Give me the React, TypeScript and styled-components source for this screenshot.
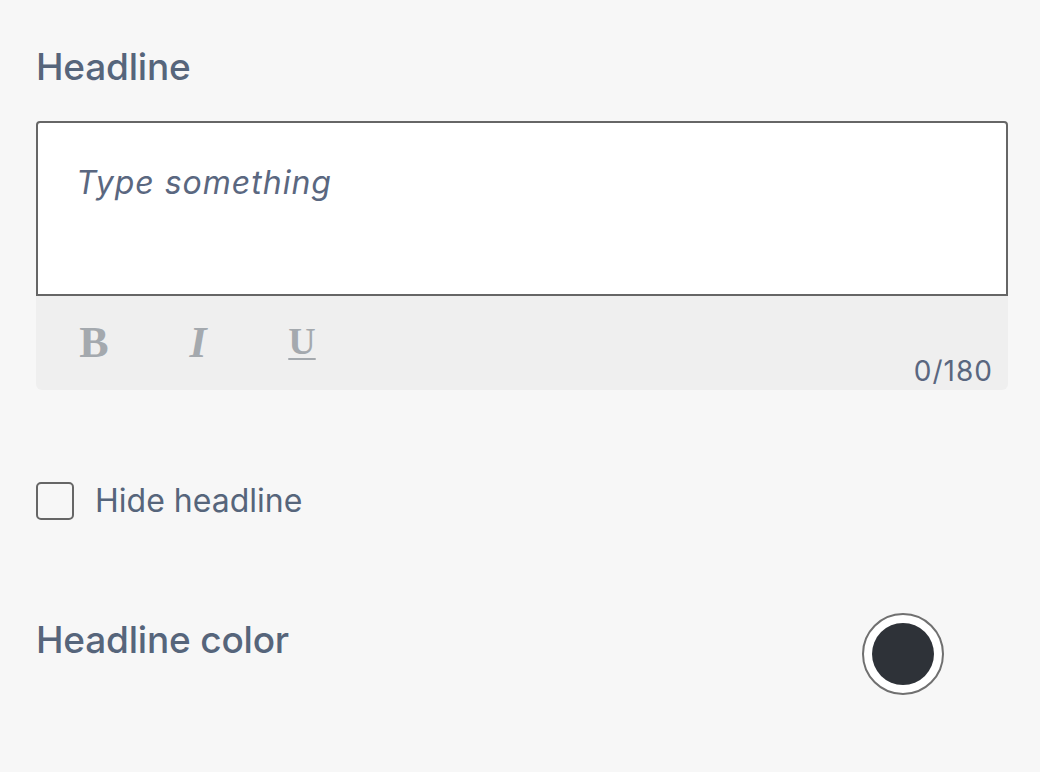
import styled, { createGlobalStyle } from "styled-components";

const GlobalStyle = createGlobalStyle`
  html, body {
    margin: 0;
    padding: 0;
    background: #f7f7f7;
  }
  body {
    font-family: Inter, Lato, Arial, sans-serif;
    color: #56657b;
  }
`;

const tools = [
  { key: "bold", glyph: "B" },
  { key: "italic", glyph: "I" },
  { key: "underline", glyph: "U" },
];

function App() {
  return (
    <>
      <GlobalStyle />
      <Panel>
        <Label>Headline</Label>

        <Editor>
          <TextInput placeholder="Type something" />
          <Toolbar>
            {tools.map((t) => (
              <ToolButton key={t.key} variant={t.key}>
                {t.glyph}
              </ToolButton>
            ))}
            <Counter>0/180</Counter>
          </Toolbar>
        </Editor>

        <CheckRow>
          <Box type="checkbox" />
          <CheckText>Hide headline</CheckText>
        </CheckRow>

        <ColorRow>
          <Label>Headline color</Label>
          <Swatch>
            <SwatchFill color="#2e3238" />
          </Swatch>
        </ColorRow>
      </Panel>
    </>
  );
}

const Panel = styled.div`
  display: flex;
  flex-direction: column;
  padding: 43px 32px 60px 36px;
`;

const Label = styled.div`
  font-size: 37px;
  line-height: 48px;
  font-weight: 500;
  letter-spacing: -0.2px;
  color: #56657b;
`;

const Editor = styled.div`
  display: flex;
  flex-direction: column;
  margin-top: 30px;
`;

const TextInput = styled.textarea`
  box-sizing: border-box;
  height: 175px;
  margin: 0;
  padding: 40px 38px 0 38px;
  border: 2px solid #666;
  border-radius: 4px 4px 0 0;
  background: #fff;
  resize: none;
  outline: none;
  font-family: Inter, Lato, Arial, sans-serif;
  font-size: 32px;
  line-height: 40px;
  letter-spacing: 1px;
  color: #56657b;

  &::placeholder {
    font-style: italic;
    color: #5a6780;
    opacity: 1;
  }
`;

const Toolbar = styled.div`
  display: flex;
  align-items: flex-start;
  height: 94px;
  box-sizing: border-box;
  padding: 25px 15px 5px 28px;
  background: #efefef;
  border-radius: 0 0 6px 6px;
`;

const ToolButton = styled.button<{ variant: string }>`
  width: 60px;
  height: 44px;
  margin-right: 44px;
  margin-top: ${(p) => (p.variant === "underline" ? "-2px" : "0")};
  padding: 0;
  border: none;
  background: none;
  font-family: "Liberation Serif", "Times New Roman", serif;
  font-size: ${(p) => (p.variant === "underline" ? "38px" : "44px")};
  line-height: 44px;
  font-weight: 700;
  font-style: ${(p) => (p.variant === "italic" ? "italic" : "normal")};
  text-decoration: ${(p) => (p.variant === "underline" ? "underline" : "none")};
  text-decoration-thickness: 2px;
  text-underline-offset: 4px;
  color: #a4a9ae;
  cursor: pointer;
`;

const Counter = styled.span`
  margin-left: auto;
  align-self: flex-end;
  font-size: 28px;
  line-height: 28px;
  letter-spacing: 1px;
  color: #5a6780;
`;

const CheckRow = styled.label`
  display: flex;
  align-items: center;
  gap: 21px;
  margin-top: 92px;
`;

const Box = styled.input`
  appearance: none;
  box-sizing: border-box;
  width: 38px;
  height: 38px;
  margin: 0;
  border: 2px solid #666;
  border-radius: 5px;
  background: transparent;
`;

const CheckText = styled.span`
  font-size: 32px;
  line-height: 38px;
  color: #56657b;
`;

const ColorRow = styled.div`
  display: flex;
  align-items: flex-start;
  justify-content: space-between;
  margin-top: 93px;
  padding-right: 64px;

  ${Label} {
    padding-top: 3px;
  }
`;

const Swatch = styled.div`
  box-sizing: border-box;
  width: 82px;
  height: 82px;
  display: flex;
  align-items: center;
  justify-content: center;
  border: 2px solid #707070;
  border-radius: 50%;
  background: #fff;
`;

const SwatchFill = styled.div<{ color: string }>`
  width: 62px;
  height: 62px;
  border-radius: 50%;
  background: ${(p) => p.color};
`;

export default App;
